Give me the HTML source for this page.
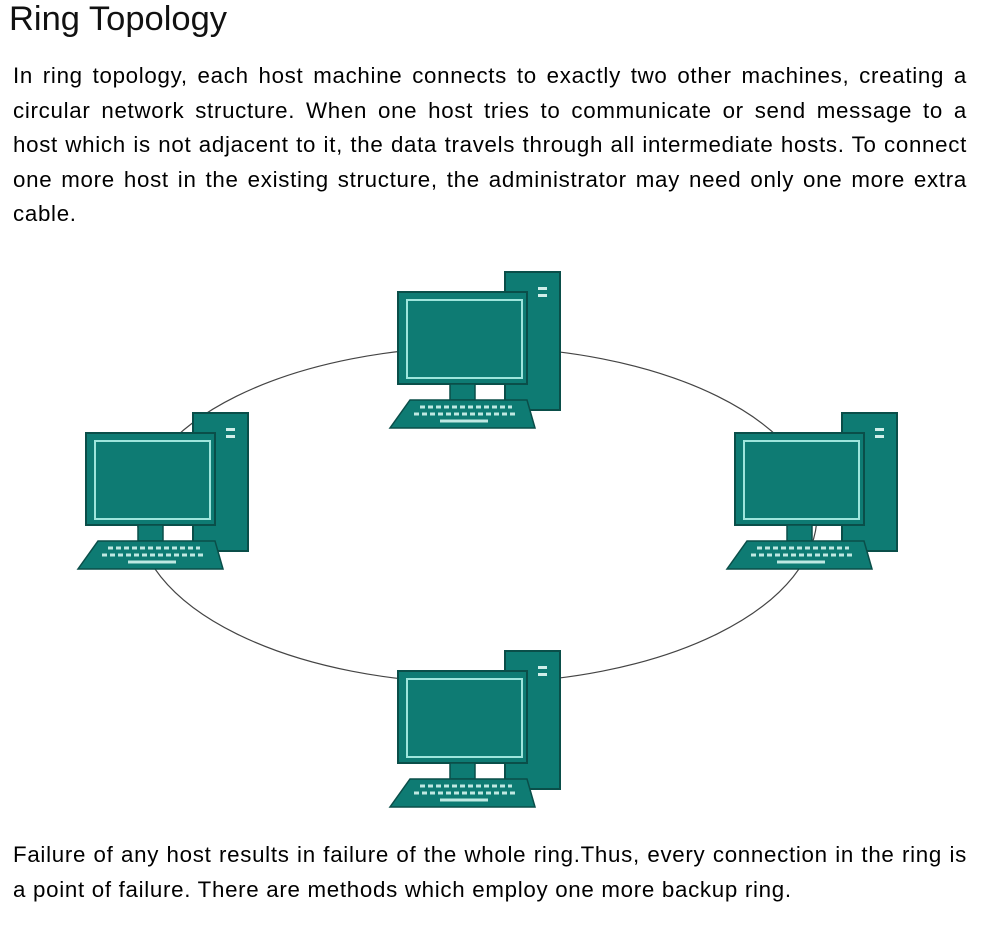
<!DOCTYPE html>
<html><head><style>
body{margin:0;background:#fff;width:990px;height:927px;overflow:hidden;font-family:"Liberation Sans",Arial,sans-serif;color:#000}
h1{position:absolute;left:9px;top:0px;margin:0;font-weight:normal;font-size:34.5px;color:#111}
.p{position:absolute;left:13px;width:954px;margin:0;font-size:22.3px;line-height:34.5px;letter-spacing:0.7px}
.p div{text-align:justify;text-align-last:justify;white-space:nowrap}
.p div.l{text-align-last:left}
svg{position:absolute;left:0;top:0}
</style></head><body>
<h1>Ring Topology</h1>
<div class="p" style="top:59px">
<div>In ring topology, each host machine connects to exactly two other machines, creating a</div>
<div>circular network structure. When one host tries to communicate or send message to a</div>
<div>host which is not adjacent to it, the data travels through all intermediate hosts. To connect</div>
<div>one more host in the existing structure, the administrator may need only one more extra</div>
<div class="l">cable.</div>
</div>
<svg width="990" height="927">
<defs>
<g id="pc">
<rect x="115" y="0" width="55" height="138" fill="#0e7b73" stroke="#0a4e49" stroke-width="2"/>
<rect x="148" y="15" width="9" height="3" fill="#cfeee9"/><rect x="148" y="22" width="9" height="3" fill="#cfeee9"/>
<rect x="8" y="20" width="129" height="92" fill="#0e7b73" stroke="#0a4e49" stroke-width="2"/>
<rect x="17" y="28" width="115" height="78" fill="none" stroke="#9ee5dc" stroke-width="2"/>
<rect x="60" y="112" width="25" height="16" fill="#0e7b73" stroke="#0a4e49" stroke-width="1.5"/>
<polygon points="20,128 137,128 145,156 0,156" fill="#0e7b73" stroke="#0a4e49" stroke-width="1.5"/>
<g stroke="#bfe8e2" stroke-width="3" stroke-dasharray="5,3"><line x1="30" y1="135" x2="122" y2="135"/><line x1="24" y1="142" x2="128" y2="142"/></g>
<line x1="50" y1="149" x2="98" y2="149" stroke="#bfe8e2" stroke-width="3"/>
</g>
</defs>
<ellipse cx="477" cy="515" rx="340" ry="168" fill="none" stroke="#444" stroke-width="1.2"/>
<use href="#pc" x="390" y="272"/>
<use href="#pc" x="78" y="413"/>
<use href="#pc" x="727" y="413"/>
<use href="#pc" x="390" y="651"/>
</svg>
<div class="p" style="top:838px">
<div>Failure of any host results in failure of the whole ring.Thus, every connection in the ring is</div>
<div class="l">a point of failure. There are methods which employ one more backup ring.</div>
</div>
</body></html>
